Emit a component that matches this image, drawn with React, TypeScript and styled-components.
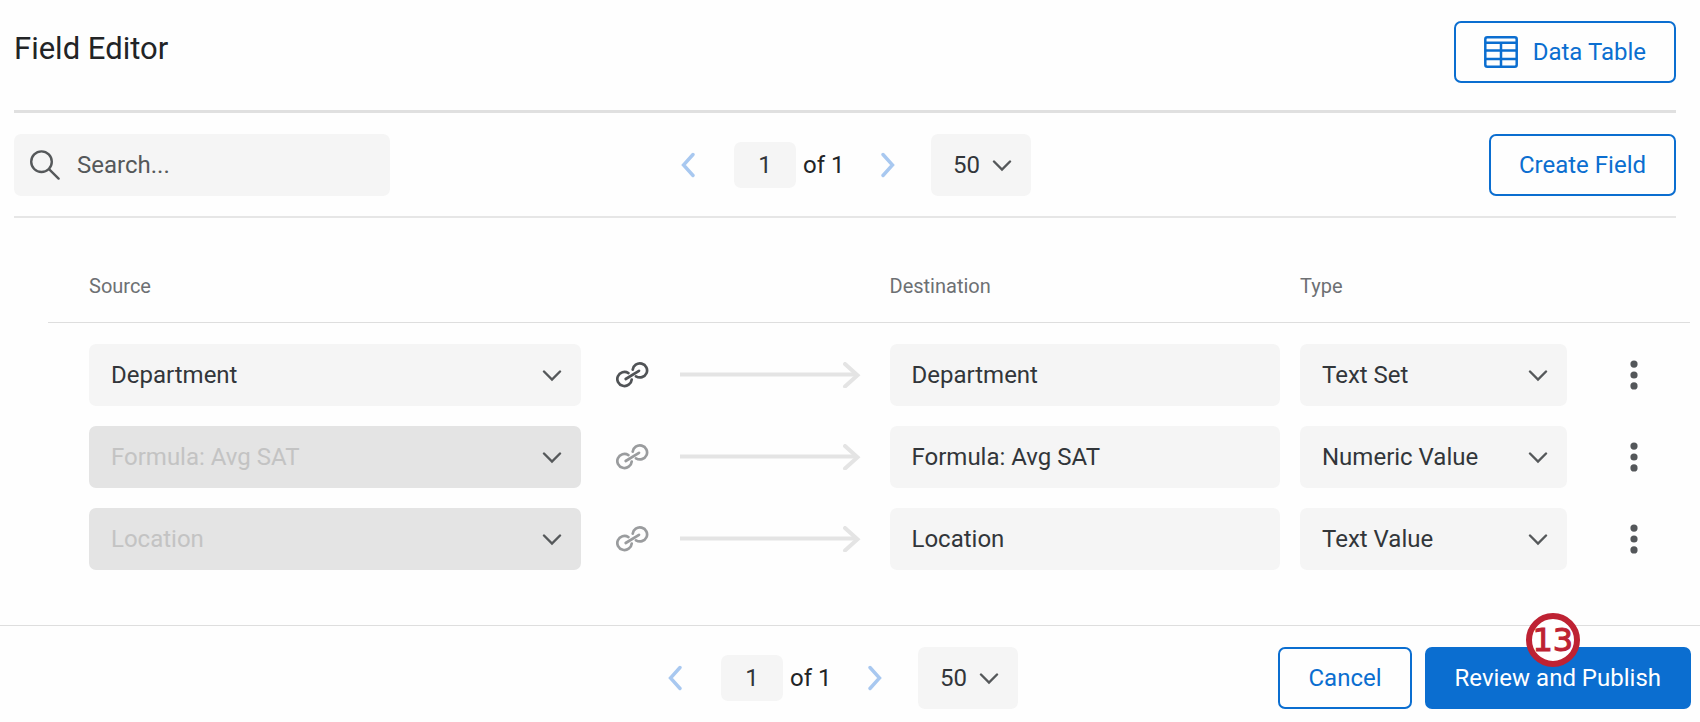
import React from "react";
import styled, { createGlobalStyle } from "styled-components";

const GlobalStyle = createGlobalStyle`
  *, *::before, *::after { box-sizing: border-box; }
  body { margin: 0; background: #fefefe; color: #32363a; }
  body, button, input, select { font-family: Roboto, "Liberation Sans", sans-serif; font-size: 24px; line-height: 30px; }
`;

const BLUE = "#0b6ed0";
const FIELD = "#f5f5f5";

const Page = styled.main`
  display: flex;
  flex-direction: column;
`;

const Header = styled.header`
  display: flex;
  align-items: flex-start;
  justify-content: space-between;
  margin: 0 24px 0 14px;
  padding: 21px 0 27px;
  border-bottom: 3px solid #e0e0e0;
`;

const Title = styled.h1`
  margin: 0;
  padding-top: 10px;
  font-size: 31px;
  line-height: 36px;
  font-weight: 400;
  color: #222426;
`;

const Button = styled.button<{ $primary?: boolean }>`
  display: flex;
  align-items: center;
  gap: 15px;
  height: 62px;
  padding: 0 28px;
  border: 2px solid ${BLUE};
  border-radius: 7px;
  background: ${(p) => (p.$primary ? BLUE : "#fefefe")};
  color: ${(p) => (p.$primary ? "#ffffff" : BLUE)};
  white-space: nowrap;
  cursor: pointer;
`;

const Toolbar = styled.div`
  display: grid;
  grid-template-columns: 1fr auto 1fr;
  align-items: center;
  margin: 0 24px 0 14px;
  padding: 21px 0 20px;
  border-bottom: 2px solid #e6e6e6;

  & > button { justify-self: end; }
`;

const SearchBox = styled.label`
  display: flex;
  align-items: center;
  gap: 17px;
  width: 376px;
  height: 62px;
  padding: 0 16px;
  border-radius: 7px;
  background: ${FIELD};
`;

const SearchInput = styled.input`
  flex: 1;
  min-width: 0;
  padding: 0;
  border: 0;
  background: transparent;
  &::placeholder { color: #55585a; opacity: 1; }
`;

const Pager = styled.nav`
  display: flex;
  align-items: center;
  color: #222426;
`;

const IconButton = styled.button<{ $width: number }>`
  display: flex;
  align-items: center;
  justify-content: center;
  width: ${(p) => p.$width}px;
  height: 46px;
  padding: 0;
  border: 0;
  background: transparent;
  color: #54575a;
  cursor: pointer;
`;

const PageInput = styled.input`
  width: 62px;
  height: 46px;
  margin: 0 7px 0 17px;
  padding: 0;
  border: 0;
  border-radius: 7px;
  background: ${FIELD};
  color: #32363a;
  text-align: center;
`;

const PageCount = styled.span`
  width: 55px;
`;

const SelectWrap = styled.div<{ $width?: number }>`
  position: relative;
  width: ${(p) => (p.$width ? `${p.$width}px` : "100%")};

  & > svg {
    position: absolute;
    top: 26px;
    right: 19px;
    pointer-events: none;
  }
`;

const Select = styled.select`
  display: block;
  appearance: none;
  width: 100%;
  height: 62px;
  padding: 0 48px 0 22px;
  border: 0;
  border-radius: 7px;
  background: ${FIELD};
  color: #32363a;

  &:disabled { background: #e4e4e4; color: #c3c3c3; opacity: 1; }
`;

const PageSize = styled.div`
  margin-left: 13px;
`;

const TextField = styled.input`
  display: block;
  width: 100%;
  height: 62px;
  padding: 0 22px;
  border: 0;
  border-radius: 7px;
  background: ${FIELD};
  color: #32363a;
`;

const TableArea = styled.section`
  padding: 50px 10px 55px 48px;
`;

const Table = styled.table`
  width: 100%;
  table-layout: fixed;
  border-collapse: collapse;
`;

const Col = styled.col<{ $width?: string }>`
  width: ${(p) => p.$width ?? "auto"};
`;

const Th = styled.th<{ $indent?: boolean }>`
  padding: 5px 0 23px ${(p) => (p.$indent ? 41 : 0)}px;
  border-bottom: 1px solid #dedede;
  font-size: 20px;
  line-height: 26px;
  font-weight: 400;
  text-align: left;
  color: #6d7073;
`;

const Td = styled.td<{ $left?: number; $right?: number }>`
  padding: 20px ${(p) => p.$right ?? 0}px 0 ${(p) => p.$left ?? 0}px;
  tr:first-child > & { padding-top: 21px; }
`;

const Connector = styled.div`
  display: flex;
  align-items: center;
  gap: 31px;
`;

const LinkButton = styled.button`
  display: flex;
  padding: 0;
  border: 0;
  background: transparent;
  color: #505356;
  &:disabled { color: #9a9c9e; }
`;

const Footer = styled.footer`
  display: grid;
  grid-template-columns: 38% auto 1fr;
  align-items: center;
  padding: 21px 0 14px;
  border-top: 1px solid #dedede;
`;

const Actions = styled.div`
  display: flex;
  justify-content: flex-end;
  gap: 13px;
  padding-right: 9px;
`;

const PublishWrap = styled.div`
  position: relative;
`;

const StepBadge = styled.span`
  position: absolute;
  top: -34px;
  left: 50%;
  display: flex;
  align-items: center;
  justify-content: center;
  width: 54px;
  height: 54px;
  margin-left: -32px;
  border: 6px solid #be2233;
  border-radius: 50%;
  background: #ffffff;
  color: #be2233;
  font-family: "DejaVu Sans", sans-serif;
  font-size: 32px;
  line-height: 42px;
  -webkit-text-stroke: 1px #be2233;
`;

const ChevronDown = () => (
  <svg width="20" height="12" viewBox="0 0 20 12" fill="none" aria-hidden="true">
    <path d="M2 1.5 10 9.5 18 1.5" stroke="#55585a" strokeWidth="2.4" strokeLinecap="round" />
  </svg>
);

const PageArrow = ({ next }: { next?: boolean }) => (
  <svg width="14" height="26" viewBox="0 0 14 26" fill="none" aria-hidden="true">
    <path d={next ? "M2 2.5 11.5 13 2 23.5" : "M12 2.5 2.5 13 12 23.5"} stroke="#a8c8f0" strokeWidth="3.4" strokeLinecap="round" />
  </svg>
);

const SearchIcon = () => (
  <svg width="30" height="30" viewBox="0 0 30 30" fill="none" stroke="#55585a" strokeWidth="2.4" strokeLinecap="round" aria-hidden="true">
    <circle cx="11.5" cy="11.7" r="10.3" />
    <path d="M19 19.2 28.6 28.6" />
  </svg>
);

const GridIcon = () => (
  <svg width="34" height="32" viewBox="0 0 34 32" fill="none" stroke={BLUE} strokeWidth="2.5" aria-hidden="true">
    <rect x="1.3" y="1.3" width="31.4" height="29.4" rx="2" />
    <path d="M1 6.8H33M1 14.6H33M1 22.9H33M17 6.8V31" />
  </svg>
);

const LinkIcon = () => (
  <svg width="33" height="26" viewBox="0 0 33 26" fill="none" stroke="currentColor" strokeWidth="2.7" strokeLinecap="round" aria-hidden="true">
    <path d="M12.4 11.1A7.2 7 0 1 0 15.7 17.6" />
    <path d="M20 14.3A7.2 7 0 1 0 16.7 7.7" />
    <path d="M9.7 17 23 8.8" />
  </svg>
);

const FlowArrow = () => (
  <svg width="181" height="26" viewBox="0 0 181 26" fill="none" stroke="#e4e4e4" strokeWidth="4" aria-hidden="true">
    <path d="M0 12.5H177" />
    <path d="M165 2 177.5 13.3 165 24.5" strokeLinecap="round" />
  </svg>
);

const DotsIcon = () => (
  <svg width="8" height="30" viewBox="0 0 8 30" fill="currentColor" aria-hidden="true">
    <circle cx="4" cy="4.1" r="3.6" />
    <circle cx="4" cy="15" r="3.6" />
    <circle cx="4" cy="25.9" r="3.6" />
  </svg>
);

interface DropdownProps {
  label: string;
  value: string;
  width?: number;
  disabled?: boolean;
}

const Dropdown = ({ label, value, width, disabled }: DropdownProps) => (
  <SelectWrap $width={width}>
    <Select aria-label={label} defaultValue={value} disabled={disabled}>
      <option>{value}</option>
    </Select>
    <ChevronDown />
  </SelectWrap>
);

const Pagination = ({ label }: { label: string }) => (
  <Pager aria-label={label}>
    <IconButton $width={58} aria-label="Previous page"><PageArrow /></IconButton>
    <PageInput aria-label="Page" defaultValue="1" />
    <PageCount>of 1</PageCount>
    <IconButton $width={60} aria-label="Next page"><PageArrow next /></IconButton>
    <PageSize><Dropdown label="Rows per page" value="50" width={100} /></PageSize>
  </Pager>
);

const fields = [
  { name: "Department", type: "Text Set", locked: false },
  { name: "Formula: Avg SAT", type: "Numeric Value", locked: true },
  { name: "Location", type: "Text Value", locked: true },
];

export default function App() {
  return (
    <Page>
      <GlobalStyle />
      <Header>
        <Title>Field Editor</Title>
        <Button><GridIcon />Data Table</Button>
      </Header>
      <Toolbar>
        <SearchBox>
          <SearchIcon />
          <SearchInput aria-label="Search fields" placeholder="Search..." />
        </SearchBox>
        <Pagination label="Pages" />
        <Button>Create Field</Button>
      </Toolbar>
      <TableArea>
        <Table>
          <colgroup>
            <Col />
            <Col $width="309px" />
            <Col $width="25%" />
            <Col $width="267px" />
            <Col $width="123px" />
          </colgroup>
          <thead>
            <tr>
              <Th $indent>Source</Th>
              <Th />
              <Th>Destination</Th>
              <Th>Type</Th>
              <Th />
            </tr>
          </thead>
          <tbody>
            {fields.map((f) => (
              <tr key={f.name}>
                <Td $left={41}><Dropdown label="Source" value={f.name} disabled={f.locked} /></Td>
                <Td $left={35}>
                  <Connector>
                    <LinkButton aria-label="Link field" disabled={f.locked}><LinkIcon /></LinkButton>
                    <FlowArrow />
                  </Connector>
                </Td>
                <Td $right={20}><TextField aria-label="Destination" defaultValue={f.name} /></Td>
                <Td><Dropdown label="Type" value={f.type} /></Td>
                <Td $left={43}><IconButton $width={48} aria-label="More options"><DotsIcon /></IconButton></Td>
              </tr>
            ))}
          </tbody>
        </Table>
      </TableArea>
      <Footer>
        <span />
        <Pagination label="Pages, bottom" />
        <Actions>
          <Button>Cancel</Button>
          <PublishWrap>
            <Button $primary>Review and Publish</Button>
            <StepBadge>13</StepBadge>
          </PublishWrap>
        </Actions>
      </Footer>
    </Page>
  );
}
